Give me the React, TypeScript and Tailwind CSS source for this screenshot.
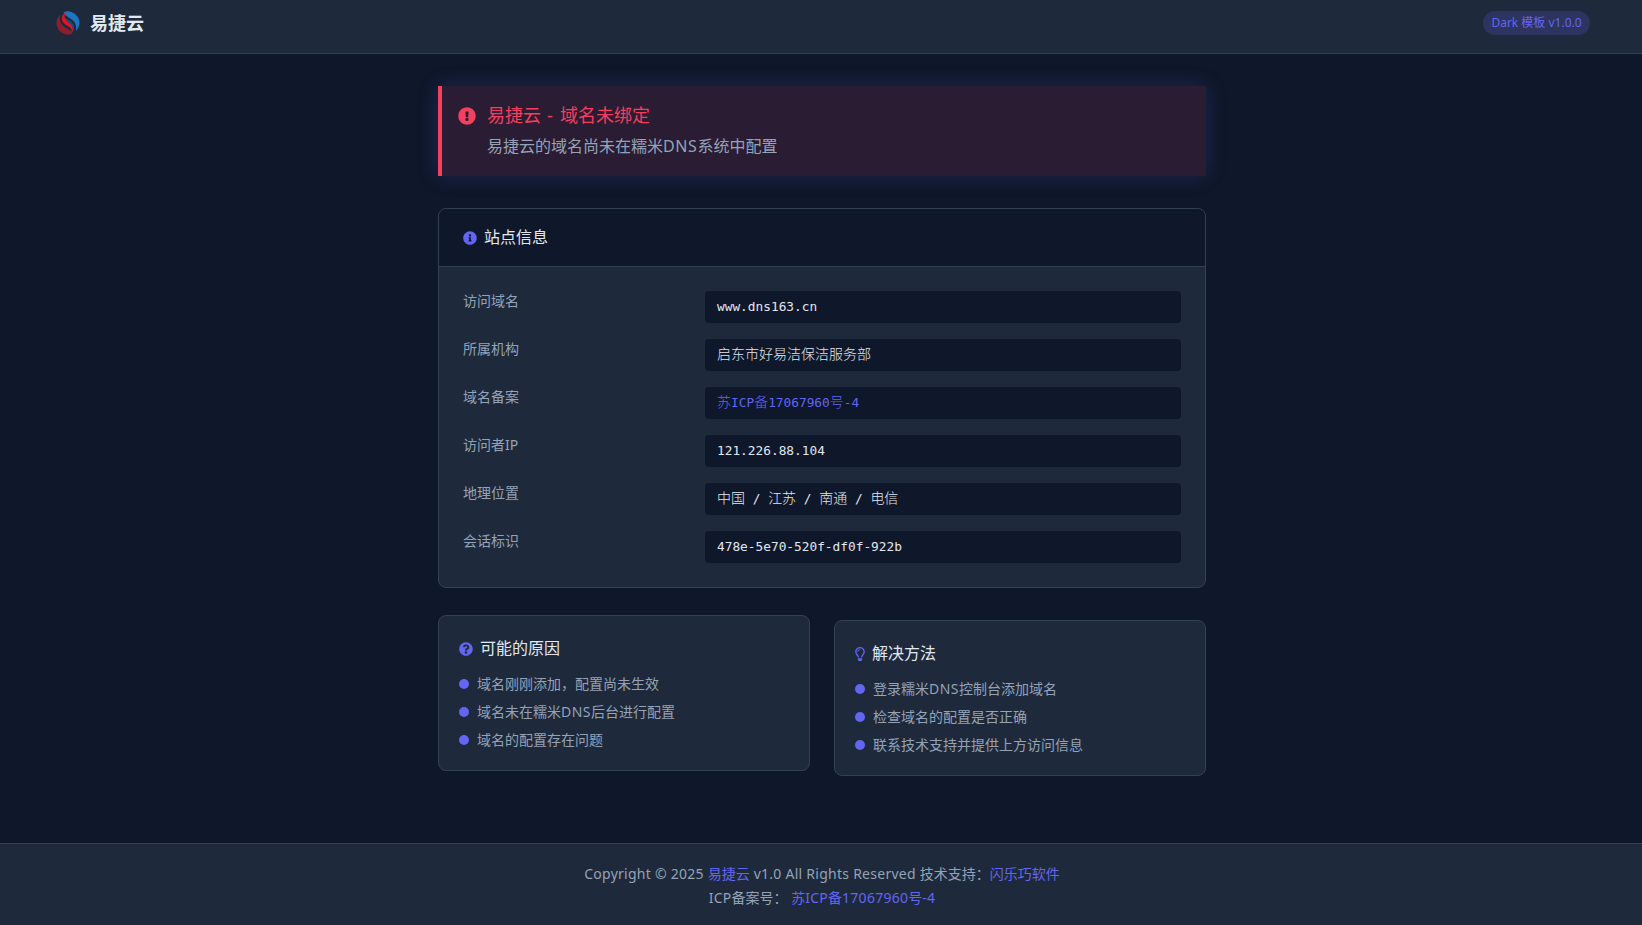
import { FaExclamationCircle, FaInfoCircle, FaQuestionCircle, FaRegLightbulb } from "react-icons/fa";

function Logo() {
  const outer = "M7.5 1.2A11.6 11.6 0 0 1 19.6 20.6C21.2 15.6 19.6 11.6 16.2 8.8 13 6.2 9.2 5.2 7.5 1.2Z";
  const inner = "M7.2 3.6C8.4 7.4 12 8.4 15 10.8 18 13.2 19 16.6 17.2 20.2 16 22 14.6 22.8 13.4 23 16 20.4 16 17 13.6 14.6 10.8 11.8 5.6 8.8 7.2 3.6Z";
  return (
    <svg viewBox="0 0 24 24" className="h-6 w-6 shrink-0">
      <path d={outer} fill="#1b76bf" />
      <path d={inner} fill="#0f4d8c" />
      <g transform="rotate(180 12 12)">
        <path d={outer} fill="#8d1d2f" />
        <path d={inner} fill="#e2141f" />
      </g>
    </svg>
  );
}

function Row({ label, children, link }: { label: string; children: React.ReactNode; link?: boolean }) {
  return (
    <>
      <div className="text-[14px] leading-[19px] text-[#94a3b8]">{label}</div>
      <div className={`flex h-8 items-center whitespace-pre rounded bg-[#0f172a] px-3 pb-[1px] text-[14px] font-light [font-family:'DejaVu_Sans_Mono','Noto_Sans_CJK_SC',monospace] ${link ? "text-[#6366f1]" : "text-[#e2e8f0]"}`}>
        {children}
      </div>
    </>
  );
}

function L({ children }: { children: React.ReactNode }) {
  return <span className="relative top-[0.5px] text-[12.8px] font-normal">{children}</span>;
}

function T({ children }: { children: React.ReactNode }) {
  return <span className="tracking-[0.26px]">{children}</span>;
}

function Bullets({ items }: { items: React.ReactNode[] }) {
  return (
    <ul className="mt-3 flex flex-col gap-[6px]">
      {items.map((t, i) => (
        <li key={i} className="flex items-center gap-2 text-[14px] leading-[22px] text-[#94a3b8]">
          <span className="h-[10px] w-[10px] shrink-0 rounded-full bg-[#6366f1]" />
          <span>{t}</span>
        </li>
      ))}
    </ul>
  );
}

export default function App() {
  return (
    <div className="flex min-h-screen flex-col bg-[#0f172a] [font-family:'Noto_Sans','Noto_Sans_CJK_SC',sans-serif]">
      <header className="flex h-[54px] items-start justify-between border-b border-[#334155] bg-[#1e293b] pl-[56px] pr-[52px] pt-[11px]">
        <div className="flex items-center gap-[10px]">
          <Logo />
          <span className="text-[18px] font-bold leading-6 text-[#e2e8f0]">易捷云</span>
        </div>
        <div className="flex h-6 w-[107px] items-center justify-center rounded-full bg-[#6366f1]/20 text-[12px] text-[#6366f1]">Dark 模板 v1.0.0</div>
      </header>

      <main className="ml-[438px] flex w-[768px] flex-1 flex-col gap-8 pt-8">
        <section className="flex h-[90px] items-start gap-[11px] border-l-4 border-[#f43f5e] bg-[#2a1c33] pl-4 pt-[15px] shadow-[0_0_20px_rgba(99,102,241,0.2)]">
          <FaExclamationCircle className="mt-[6px] h-[18px] w-[18px] shrink-0 text-[#f43f5e]" />
          <div>
            <h1 className="text-[18px] font-normal leading-[29px] text-[#f43f5e]">易捷云<span className="tracking-[1.3px]"> - </span>域名未绑定</h1>
            <p className="mt-[3px] text-[16px] leading-[26px] text-[#94a3b8]">易捷云的域名尚未在糯米<span className="tracking-[0.6px]">DNS</span>系统中配置</p>
          </div>
        </section>

        <section className="overflow-hidden rounded-lg border border-[#334155] bg-[#1e293b]">
          <div className="flex items-center gap-[7px] border-b border-[#334155] bg-[#0f172a] px-6 py-4">
            <FaInfoCircle className="h-[14px] w-[14px] text-[#6366f1]" />
            <h2 className="text-[16px] font-normal leading-[25px] text-[#e2e8f0]">站点信息</h2>
          </div>
          <div className="grid grid-cols-[226px_1fr] gap-x-4 gap-y-4 p-6">
            <Row label="访问域名"><L>www.dns163.cn</L></Row>
            <Row label="所属机构">启东市好易洁保洁服务部</Row>
            <Row label="域名备案" link>苏<L>ICP</L>备<L>17067960</L>号<L>-4</L></Row>
            <Row label="访问者IP"><L>121.226.88.104</L></Row>
            <Row label="地理位置">中国<L> / </L>江苏<L> / </L>南通<L> / </L>电信</Row>
            <Row label="会话标识"><L>478e-5e70-520f-df0f-922b</L></Row>
          </div>
        </section>

        <div className="grid grid-cols-2 gap-6 pb-8">
          <section className="-translate-y-[5px] rounded-lg border border-[#334155] bg-[#1e293b] px-5 pb-[19px] pt-5">
            <div className="flex items-center gap-[7px]">
              <FaQuestionCircle className="h-[14px] w-[14px] text-[#6366f1]" />
              <h3 className="text-[16px] font-normal leading-[25px] text-[#e2e8f0]">可能的原因</h3>
            </div>
            <Bullets items={["域名刚刚添加，配置尚未生效", <>域名未在糯米<span className="tracking-[0.5px]">DNS</span>后台进行配置</>, "域名的配置存在问题"]} />
          </section>
          <section className="rounded-lg border border-[#334155] bg-[#1e293b] px-5 pb-[19px] pt-5">
            <div className="flex items-center gap-[7px]">
              <FaRegLightbulb className="h-[14px] w-[10px] text-[#6366f1]" />
              <h3 className="text-[16px] font-normal leading-[25px] text-[#e2e8f0]">解决方法</h3>
            </div>
            <Bullets items={[<>登录糯米<span className="tracking-[0.5px]">DNS</span>控制台添加域名</>, "检查域名的配置是否正确", "联系技术支持并提供上方访问信息"]} />
          </section>
        </div>
      </main>

      <footer className="h-[82px] border-t border-[#334155] bg-[#1e293b] pl-[2px] pt-[18px] text-center text-[14px] leading-6 text-[#94a3b8]">
        <div>
          <T>Copyright © 2025 </T><a className="text-[#6366f1]">易捷云</a><T> v1.0 All Rights Reserved </T>技术支持：<a className="text-[#6366f1]">闪乐巧软件</a>
        </div>
        <div>
          <T>ICP</T>备案号： <a className="text-[#6366f1]">苏<T>ICP</T>备<T>17067960</T>号<T>-4</T></a>
        </div>
      </footer>
    </div>
  );
}
